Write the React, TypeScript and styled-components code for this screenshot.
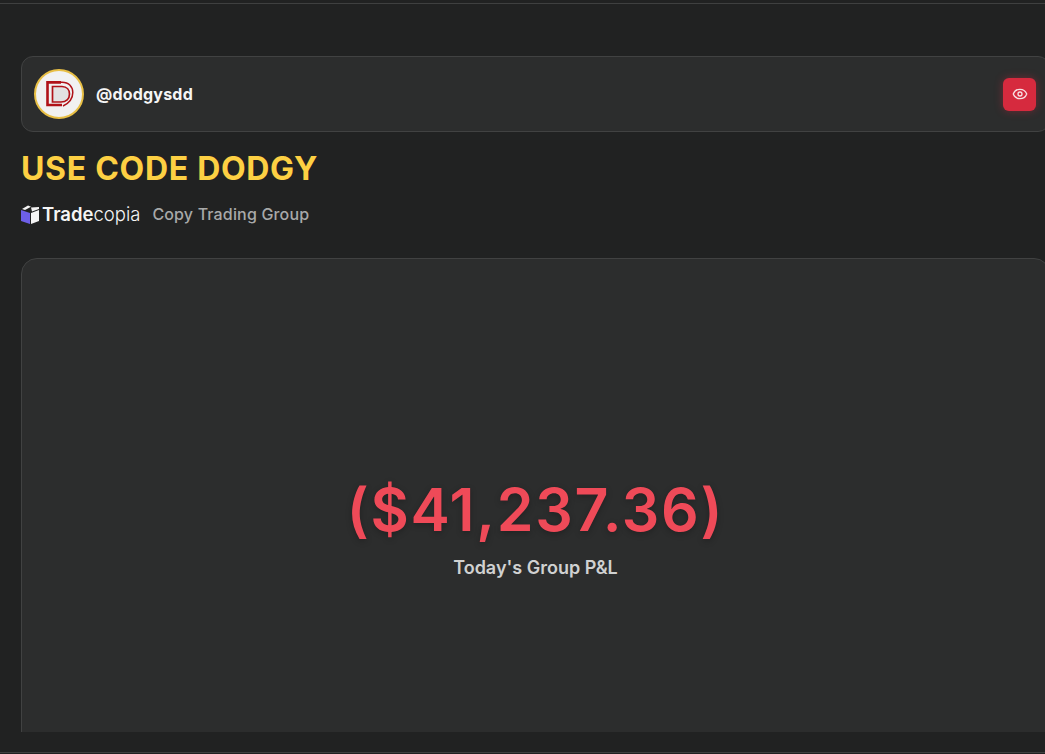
import styled, { createGlobalStyle } from "styled-components";
import { Eye } from "lucide-react";

const GlobalStyle = createGlobalStyle`
  html, body {
    margin: 0;
    height: 100%;
    background: #212222;
    overflow: hidden;
    font-family: Inter, "Liberation Sans", sans-serif;
  }
`;

// 로고들은 svg로 직접 그림
const DodgyLogo = () => (
  <svg width="30" height="30" viewBox="0 0 30 30" fill="none">
    <path d="M8.5 7.5 H18 C23 7.5 25.5 11 25.5 15 C25.5 20 22 23 17 23 H8.5 Z" fill="#e2e2e2" stroke="#b01218" strokeWidth="1.7" />
    <path d="M17 3.4 H3.5 V26 H18" stroke="#b01218" strokeWidth="2.6" />
    <path d="M16 3.2 H18 C25 3.2 28.8 8 28.8 13.5 C28.8 19 25.5 24 19 27" stroke="#b01218" strokeWidth="1.5" />
  </svg>
);

const BoxLogo = () => (
  <svg width="20" height="19" viewBox="0 0 20 19">
    <path d="M0 5 L9 8 V19 L0 16 Z" fill="#6d5fe8" />
    <path d="M10 8 L18 5 V16 L10 19 Z" fill="#f4f4f4" />
    <path d="M1 4 L7 0.5 L10 1.8 L4 5 Z" fill="#f4f4f4" />
    <path d="M10 2.5 L18 2 V4 L11 6.5 Z" fill="#f4f4f4" />
  </svg>
);

export default function App() {
  return (
    <>
      <GlobalStyle />
      <Frame>
        <Scroller>
          <ProfileCard>
            <Avatar>
              <DodgyLogo />
            </Avatar>
            <Handle>@dodgysdd</Handle>
            <EyeButton>
              <Eye size={16} strokeWidth={2} />
            </EyeButton>
          </ProfileCard>
          <PromoTitle>USE CODE DODGY</PromoTitle>
          <BrandRow>
            <Brand>
              <BoxLogo />
              <BrandName>
                <b>Trade</b>copia
              </BrandName>
            </Brand>
            <BrandTag>Copy Trading Group</BrandTag>
          </BrandRow>
          <PnlCard>
            <PnlValue>($41,237.36)</PnlValue>
            <PnlLabel>Today's Group P&amp;L</PnlLabel>
          </PnlCard>
        </Scroller>
      </Frame>
    </>
  );
}

const Frame = styled.div`
  width: 1045px;
  height: 750px;
  margin-top: 3px;
  box-sizing: border-box;
  border-top: 1px solid #3f4040;
  border-bottom: 1px solid #3f4040;
  overflow: hidden;
`;

const Scroller = styled.main`
  height: 728px;
  overflow: hidden;
  box-sizing: border-box;
  padding: 52px 0 0 21px;
  display: flex;
  flex-direction: column;
`;

const ProfileCard = styled.section`
  flex: none;
  width: 1029px;
  height: 76px;
  box-sizing: border-box;
  display: flex;
  align-items: center;
  padding: 0 13px 0 12px;
  background: #2c2d2d;
  border: 1px solid #414242;
  border-radius: 12px;
`;

const Avatar = styled.div`
  width: 50px;
  height: 50px;
  box-sizing: border-box;
  border-radius: 50%;
  border: 2px solid #e8bf45;
  background: #f1f1f1;
  display: flex;
  align-items: center;
  justify-content: center;
`;

const Handle = styled.span`
  margin-left: 12px;
  font-size: 16px;
  font-weight: 700;
  letter-spacing: 0.2px;
  color: #f5f5f5;
`;

const EyeButton = styled.button`
  margin-left: auto;
  width: 33px;
  height: 33px;
  padding: 0;
  border: none;
  border-radius: 6px;
  background: #d62a3e;
  color: #f7dfe2;
  display: flex;
  align-items: center;
  justify-content: center;
  box-shadow: 0 0 8px rgba(217, 40, 63, 0.4);
`;

const PromoTitle = styled.h1`
  margin: 19px 0 0;
  font-size: 32px;
  line-height: 36px;
  font-weight: 700;
  letter-spacing: 0.7px;
  color: #fdd043;
`;

const BrandRow = styled.div`
  margin-top: 16px;
  height: 24px;
  display: flex;
  align-items: center;
  gap: 12px;
`;

const Brand = styled.div`
  display: flex;
  align-items: center;
  gap: 1px;
`;

const BrandName = styled.span`
  font-size: 18.5px;
  font-weight: 300;
  color: #f5f5f5;

  b {
    font-weight: 600;
  }
`;

const BrandTag = styled.span`
  font-size: 16px;
  font-weight: 500;
  letter-spacing: 0.16px;
  color: #a8a9a9;
`;

const PnlCard = styled.section`
  flex: none;
  width: 1029px;
  height: 560px;
  margin-top: 33px;
  box-sizing: border-box;
  padding-top: 215px;
  display: flex;
  flex-direction: column;
  align-items: center;
  background: #2c2d2d;
  border: 1px solid #414242;
  border-radius: 16px;
`;

const PnlValue = styled.div`
  font-size: 59px;
  line-height: 72px;
  font-weight: 600;
  letter-spacing: 1.7px;
  color: #ef4a58;
  text-shadow: 0 2px 6px rgba(0, 0, 0, 0.25);
`;

const PnlLabel = styled.div`
  margin-top: 8px;
  font-size: 18px;
  line-height: 28px;
  font-weight: 600;
  color: #d0d1d1;
`;
